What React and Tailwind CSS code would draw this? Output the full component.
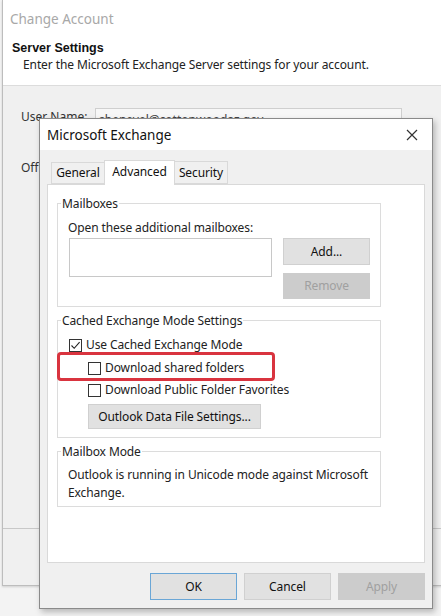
import React from "react";

function Check({ checked }) {
  return (
    <span className="flex w-[13px] h-[13px] shrink-0 items-center justify-center border border-[#333] bg-white">
      {checked && (
        <svg width="11" height="11" viewBox="0 0 11 11">
          <path d="M1.5 5.5 L4.2 8.3 L9.6 2.2" fill="none" stroke="#222" strokeWidth="1.1" />
        </svg>
      )}
    </span>
  );
}

function Btn({ children, className = "", disabled = false, focus = false }) {
  return (
    <div
      className={
        "flex items-center justify-center border text-[12px] tracking-[-0.1px] " +
        (disabled
          ? "bg-[#cccccc] border-[#cccccc] text-[#a0a0a0] "
          : focus
          ? "bg-[#e1e1e1] border-[#6aa6d6] text-[#111] "
          : "bg-[#e1e1e1] border-[#d0d0d0] text-[#111] ") +
        className
      }
    >
      {children}
    </div>
  );
}

function Group({ label, className = "", children }) {
  return (
    <div className={"relative border border-[#dcdcdc] " + className}>
      <span className="absolute left-[3px] top-[-9px] bg-white px-[1px] text-[12px] tracking-[-0.1px] leading-[18px] text-[#222]">
        {label}
      </span>
      {children}
    </div>
  );
}

export default function App() {
  return (
    <div className="relative w-[441px] h-[616px] overflow-hidden bg-[#f3f3f3] font-['Noto_Sans',sans-serif] text-[#111]">
      {/* background window */}
      <div className="ml-[2px] w-[460px] h-[586px] border-l border-b border-[#bdbdbd] bg-[#f0f0f0] shadow-[0_1px_2px_rgba(0,0,0,0.15)] flex flex-col">
        <div className="h-[86px] bg-white border-b border-[#dcdcdc] flex flex-col">
          <div className="pl-[7px] pt-[10px] text-[13.5px] leading-[18px] text-[#a8a8a8]">Change Account</div>
          <div className="pl-[9px] mt-[13px] font-['Liberation_Sans',sans-serif] text-[12.5px] leading-[15px] font-bold text-[#111]">
            Server Settings
          </div>
          <div className="pl-[20px] mt-[1px] text-[12px] tracking-[-0.1px] leading-[15px] text-[#222]">
            Enter the Microsoft Exchange Server settings for your account.
          </div>
        </div>
        <div className="flex-1 flex flex-col">
          <div className="flex items-start pt-[22px] pl-[18px]">
            <span className="text-[12px] leading-[18px] text-[#333] w-[74px]">User Name:</span>
            <div className="w-[307px] h-[20px] border border-[#cfcfcf] bg-[#f7f7f7] pl-[3px] text-[12px] leading-[22px] text-[#444] overflow-hidden">
              sbenevel@cottonwoodaz.gov
            </div>
          </div>
          <div className="pl-[18px] mt-[31px] text-[12px] leading-[18px] text-[#333]">Offline</div>
          <div className="mt-auto h-[57px] border-t border-[#c8c8c8]" />
        </div>
      </div>

      {/* dialog */}
      <div className="absolute left-[39px] top-[118px] w-[394px] h-[491px] border border-[#8a8a8a] bg-[#f0f0f0] shadow-[2px_3px_6px_rgba(0,0,0,0.25)] flex flex-col">
        <div className="h-[31px] bg-white flex items-center justify-between pl-[7px] pr-[14px]">
          <span className="text-[13.5px] leading-[20px] text-[#111]">Microsoft Exchange</span>
          <svg width="12" height="12" viewBox="0 0 12 12">
            <path d="M1 1 L11 11 M11 1 L1 11" stroke="#333" strokeWidth="1.2" fill="none" />
          </svg>
        </div>
        <div className="flex-1 flex flex-col px-[7px] pt-[10px] pb-[8px]">
          {/* tabs */}
          <div className="flex items-end h-[24px] pl-[4px] relative z-10 text-[12px] tracking-[-0.1px] leading-[18px]">
            <div className="w-[53px] h-[22px] border border-r-0 border-[#d9d9d9] bg-[#f0f0f0] flex items-center justify-center">
              General
            </div>
            <div className="w-[71px] h-[25px] mb-[-1px] border border-b-0 border-[#d9d9d9] bg-white flex items-center justify-center pb-[2px]">
              Advanced
            </div>
            <div className="w-[53px] h-[23px] border border-l-0 border-[#d9d9d9] bg-[#f0f0f0] flex items-center justify-center">
              Security
            </div>
          </div>
          {/* panel */}
          <div className="h-[379px] border border-[#d9d9d9] bg-white pl-[9px] pt-[18px] text-[12px] tracking-[-0.1px] leading-[18px] text-[#222]">
            <Group label="Mailboxes" className="w-[324px]">
              <div className="pl-[10px] pt-[15px]">Open these additional mailboxes:</div>
              <div className="flex pl-[11px] pt-[1px] pb-[7px]">
                <div className="w-[203px] h-[39px] border border-[#c8c8c8] bg-white" />
                <div className="ml-[11px] flex flex-col gap-[8px]">
                  <Btn className="w-[87px] h-[27px]">Add...</Btn>
                  <Btn className="w-[87px] h-[26px]" disabled>
                    Remove
                  </Btn>
                </div>
              </div>
            </Group>

            <Group label="Cached Exchange Mode Settings" className="w-[324px] mt-[13px]">
              <div className="flex flex-col pt-[15px] pb-[8px]">
                <div className="flex items-center h-[18px] pl-[11px] gap-[4px]">
                  <Check checked />
                  <span>Use Cached Exchange Mode</span>
                </div>
                <div className="flex items-center h-[18px] mt-[5px] pl-[30px] gap-[4px]">
                  <Check />
                  <span>Download shared folders</span>
                </div>
                <div className="flex items-center h-[18px] mt-[4px] pl-[30px] gap-[4px]">
                  <Check />
                  <span>Download Public Folder Favorites</span>
                </div>
                <div className="pl-[30px] mt-[5px]">
                  <Btn className="w-[173px] h-[25px]">Outlook Data File Settings...</Btn>
                </div>
              </div>
              <div className="absolute left-[-1px] top-[31px] w-[218px] h-[29px] rounded-[4px] border-[3px] border-[#d9343f]" />
            </Group>

            <Group label="Mailbox Mode" className="w-[324px] mt-[13px]">
              <div className="pl-[10px] pt-[14px] pb-[4px]">
                Outlook is running in Unicode mode against Microsoft
                <br />
                Exchange.
              </div>
            </Group>
          </div>
          {/* buttons */}
          <div className="flex justify-end gap-[7px] mt-[10px]">
            <Btn className="w-[87px] h-[27px]" focus>
              OK
            </Btn>
            <Btn className="w-[87px] h-[27px]">Cancel</Btn>
            <Btn className="w-[87px] h-[27px]" disabled>
              Apply
            </Btn>
          </div>
        </div>
      </div>
    </div>
  );
}
